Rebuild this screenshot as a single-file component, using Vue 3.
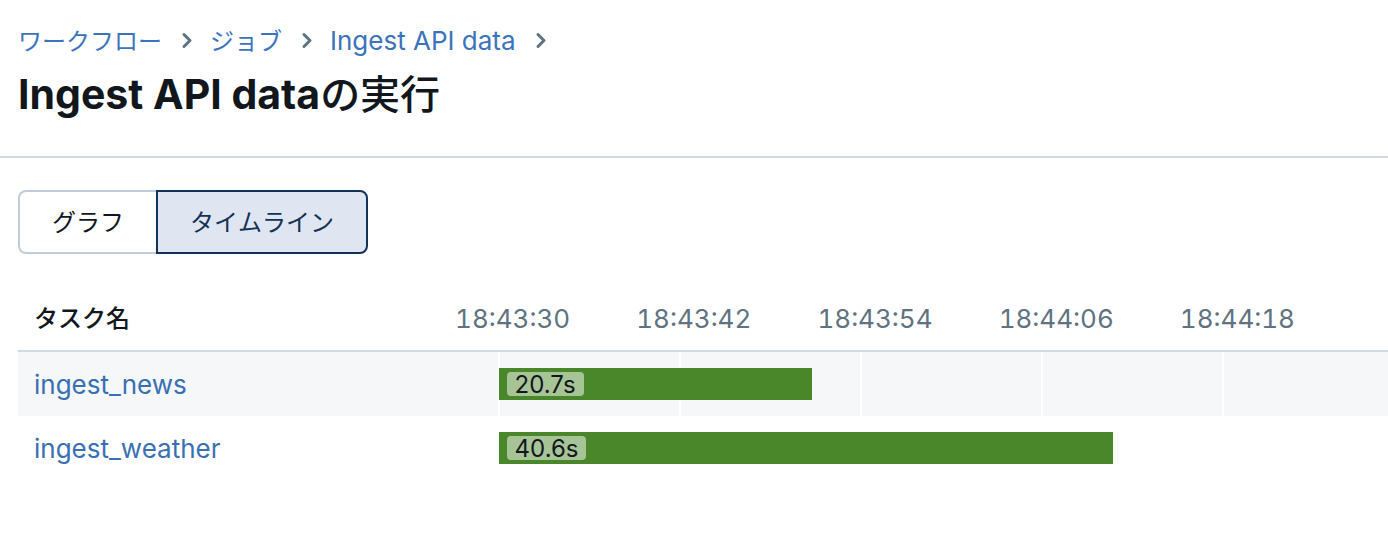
<script setup>
import { ref } from 'vue'

const crumbs = [
  { text: 'ワークフロー', ja: true },
  { text: 'ジョブ', ja: true },
  { text: 'Ingest API data', ja: false },
]
const views = ['グラフ', 'タイムライン']
const activeView = ref('タイムライン')

const ticks = ['18:43:30', '18:43:42', '18:43:54', '18:44:06', '18:44:18']

// All times are seconds counted from the left edge of the axis.
const span = 64.9
const tasks = [
  { name: 'ingest_news', start: 6, seconds: 20.74, label: '20.7s' },
  { name: 'ingest_weather', start: 6, seconds: 40.68, label: '40.6s' },
]

const barStyle = (task) => ({
  marginLeft: `${(task.start / span) * 100}%`,
  width: `${(task.seconds / span) * 100}%`,
})
</script>

<template>
  <div class="page">
    <header class="header">
      <nav class="crumbs" aria-label="パンくずリスト">
        <template v-for="crumb in crumbs" :key="crumb.text">
          <a href="#" class="link" :class="{ ja: crumb.ja }">{{ crumb.text }}</a>
          <svg class="chevron" viewBox="0 0 12 18" aria-hidden="true">
            <path d="M3 2.5 9 8.5 3 14.5" />
          </svg>
        </template>
      </nav>
      <h1 class="title">Ingest API data<span class="title-ja">の実行</span></h1>
    </header>

    <main class="content">
      <div class="switch" role="group" aria-label="表示">
        <button
          v-for="view in views"
          :key="view"
          type="button"
          class="switch-item ja"
          :class="{ active: view === activeView }"
          :aria-pressed="view === activeView"
          @click="activeView = view"
        >{{ view }}</button>
      </div>

      <table class="timeline">
        <thead>
          <tr>
            <th class="name-head ja" scope="col">タスク名</th>
            <th class="axis-head" scope="col">
              <div class="axis">
                <span v-for="tick in ticks" :key="tick" class="tick">{{ tick }}</span>
              </div>
            </th>
          </tr>
        </thead>
        <tbody>
          <tr v-for="task in tasks" :key="task.name">
            <td class="name"><a href="#" class="link">{{ task.name }}</a></td>
            <td class="track">
              <div class="axis lines" aria-hidden="true">
                <span v-for="tick in ticks" :key="tick" class="line"></span>
              </div>
              <div class="bar" :style="barStyle(task)">
                <span class="chip">{{ task.label }}</span>
              </div>
            </td>
          </tr>
        </tbody>
      </table>
    </main>
  </div>
</template>

<style>
body {
  background: #fff;
}
</style>

<style scoped>
.page {
  color: #11171c;
  font-family: Inter, "Noto Sans CJK JP", sans-serif;
  font-size: 26px;
  line-height: 32px;
}

.ja {
  font-size: 24px;
  font-kerning: none;
}

.header {
  padding: 24px 18px 34px;
  border-bottom: 2px solid #d1d9e1;
}

.crumbs {
  display: flex;
  align-items: center;
}

.link {
  color: #3a70b2;
  text-decoration: none;
}

.crumbs .link {
  color: #3b74bb;
}

.crumbs .ja {
  padding-top: 2px;
}

.chevron {
  width: 12px;
  height: 18px;
  margin: 0 17px 0 19px;
  fill: none;
  stroke: #5f7281;
  stroke-width: 3;
  stroke-linecap: round;
  stroke-linejoin: round;
}

.title {
  margin: 8px 0 0;
  font-size: 41px;
  font-weight: 700;
  line-height: 56px;
}

.title-ja {
  font-size: 40px;
  font-weight: 500;
  line-height: 40px;
}

.content {
  padding: 32px 0 0 18px;
}

.switch {
  display: flex;
}

.switch-item {
  height: 64px;
  padding: 2px 32px 0;
  border: 2px solid #c0cdd8;
  background: #fff;
  color: inherit;
  font-family: inherit;
  line-height: inherit;
  cursor: pointer;
}

.switch-item:first-child {
  border-right: 0;
  border-radius: 8px 0 0 8px;
}

.switch-item:last-child {
  border-radius: 0 8px 8px 0;
}

.switch-item.active {
  border: 2px solid #143257;
  background: #dfe6f1;
  color: #143257;
}

.timeline {
  width: 100%;
  margin-top: 32px;
  border-collapse: separate;
  border-spacing: 0;
  table-layout: fixed;
}

.timeline th,
.timeline td {
  box-sizing: border-box;
  height: 64px;
  padding: 0;
  text-align: left;
}

.timeline th {
  height: 66px;
  padding-top: 2px;
  border-bottom: 2px solid #d1d9e1;
}

.timeline .name-head {
  width: 390px;
  padding-left: 16px;
  font-weight: 500;
}

.timeline .name {
  padding: 2px 0 0 16px;
}

.axis {
  display: grid;
  grid-template-columns: repeat(5, 12fr) 4.9fr;
}

.tick {
  justify-self: center;
  padding-left: 28px;
  color: #5f7281;
  font-weight: 400;
  font-variant-numeric: tabular-nums;
}

.timeline tbody tr:nth-child(odd) {
  background: #f5f7f9;
}

.track {
  position: relative;
}

.lines {
  position: absolute;
  inset: 0;
}

.line {
  justify-self: center;
  width: 2px;
  background: #fff;
}

.bar {
  position: relative;
  display: flex;
  align-items: center;
  height: 32px;
  background: #4a872b;
}

.chip {
  margin-left: 8px;
  padding: 2px 8px 0;
  border-radius: 4px;
  background: #a6c496;
  font-size: 24px;
  line-height: 22px;
}
</style>
